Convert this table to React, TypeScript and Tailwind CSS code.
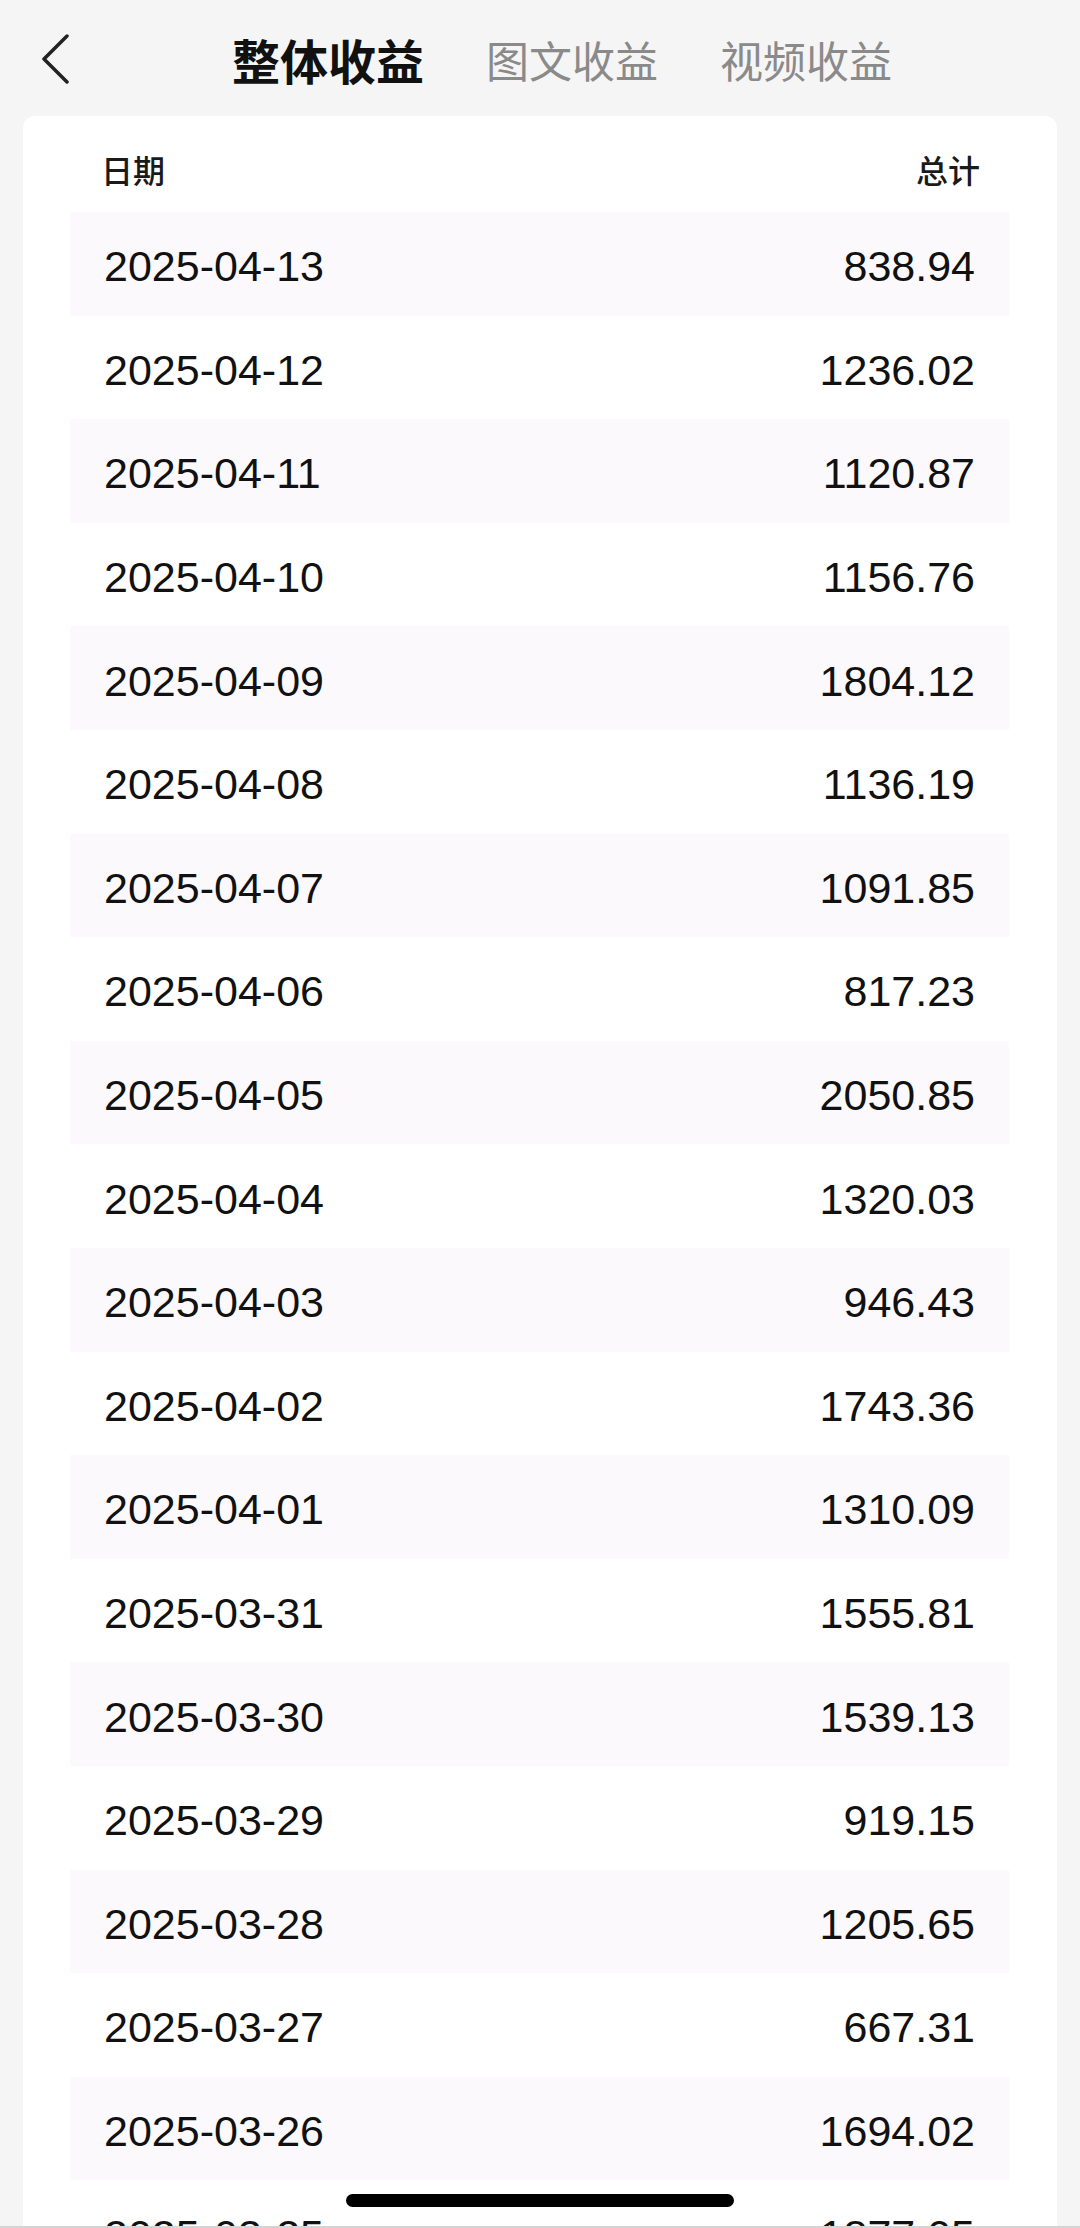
import React from 'react';

const rows: { date: string; total: string }[] = [
  { date: '2025-04-13', total: '838.94' },
  { date: '2025-04-12', total: '1236.02' },
  { date: '2025-04-11', total: '1120.87' },
  { date: '2025-04-10', total: '1156.76' },
  { date: '2025-04-09', total: '1804.12' },
  { date: '2025-04-08', total: '1136.19' },
  { date: '2025-04-07', total: '1091.85' },
  { date: '2025-04-06', total: '817.23' },
  { date: '2025-04-05', total: '2050.85' },
  { date: '2025-04-04', total: '1320.03' },
  { date: '2025-04-03', total: '946.43' },
  { date: '2025-04-02', total: '1743.36' },
  { date: '2025-04-01', total: '1310.09' },
  { date: '2025-03-31', total: '1555.81' },
  { date: '2025-03-30', total: '1539.13' },
  { date: '2025-03-29', total: '919.15' },
  { date: '2025-03-28', total: '1205.65' },
  { date: '2025-03-27', total: '667.31' },
  { date: '2025-03-26', total: '1694.02' },
  { date: '2025-03-25', total: '1877.05' },
];

const cjk = "font-['Noto_Sans_CJK_SC',sans-serif]";

export default function App() {
  return (
    <div className="relative h-[2228px] w-[1080px] overflow-hidden bg-[#f5f5f5]">
      {/* top bar with tabs */}
      <div className="flex h-[116px] items-center pl-[41px] pt-[2px]">
        <svg width="28" height="50" viewBox="0 0 28 50" className="shrink-0">
          <path d="M26 2 L3 25 L26 48" fill="none" stroke="#222" strokeWidth="3.5" strokeLinecap="round" strokeLinejoin="round" />
        </svg>
        <div className={`ml-[163px] flex items-center gap-[62px] ${cjk}`}>
          <span className="text-[48px] font-bold leading-none text-[#111]">整体收益</span>
          <span className="text-[43px] leading-none text-[#8a8a8a]">图文收益</span>
          <span className="text-[43px] leading-none text-[#8a8a8a]">视频收益</span>
        </div>
      </div>

      {/* table card */}
      <div className="mx-[23px] rounded-t-[12px] bg-white px-[47px] pr-[48px]">
        <div className={`flex h-[96px] items-center justify-between pl-[31px] pr-[29px] pt-[10px] text-[32px] font-medium leading-none text-[#1a1a1a] ${cjk}`}>
          <span>日期</span>
          <span>总计</span>
        </div>
        <div className="font-['Liberation_Sans',Arial,sans-serif] text-[43px] leading-none text-[#111]">
          {rows.map((r, i) => (
            <div
              key={r.date}
              className={`flex h-[103.6px] items-center justify-between px-[34px] pt-[6px] ${i % 2 === 0 ? 'bg-[#fbf9fc]' : 'bg-white'}`}
            >
              <span>{r.date}</span>
              <span>{r.total}</span>
            </div>
          ))}
        </div>
      </div>

      {/* home indicator */}
      <div className="absolute bottom-[21px] left-1/2 h-[13px] w-[388px] -translate-x-1/2 rounded-full bg-black" />
      <div className="absolute bottom-0 left-0 h-[2px] w-full bg-[#d4d4d4]" />
    </div>
  );
}
